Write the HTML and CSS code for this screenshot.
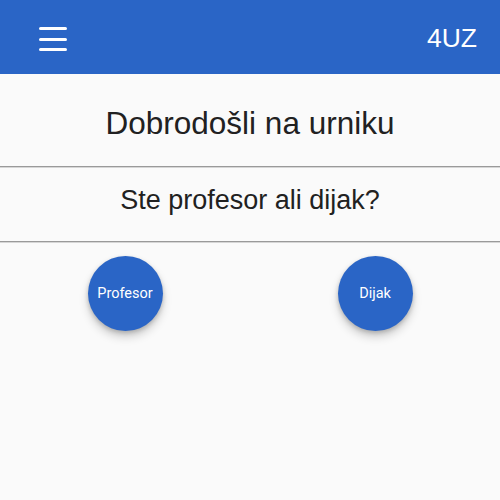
FILE: index.html
```html
<!DOCTYPE html>
<html>
<head>
<meta charset="utf-8">
<link rel="stylesheet" href="styles.css">
</head>
<body>
<header class="appbar">
  <div class="menu" aria-label="menu">
    <span class="bar"></span>
    <span class="bar"></span>
    <span class="bar"></span>
  </div>
  <div class="brand">4UZ</div>
</header>
<main class="content">
  <h1 class="title">Dobrodošli na urniku</h1>
  <h2 class="question">Ste profesor ali dijak?</h2>
  <div class="choices">
    <button class="fab">Profesor</button>
    <button class="fab">Dijak</button>
  </div>
</main>
</body>
</html>
```
FILE: styles.css
```css
html, body {
  margin: 0;
  padding: 0;
  background: #fafafa;
  font-family: "Liberation Sans", Arial, sans-serif;
  width: 500px;
  height: 500px;
  overflow: hidden;
}

.appbar {
  height: 74px;
  background: #2a65c6;
  display: flex;
  align-items: center;
  justify-content: space-between;
  padding: 0 23px 0 39px;
  box-sizing: border-box;
}

.menu {
  display: flex;
  flex-direction: column;
  gap: 7.5px;
  width: 28px;
  margin-top: 4px;
}

.bar {
  display: block;
  height: 3px;
  background: #ffffff;
  border-radius: 2px;
}

.brand {
  color: #ffffff;
  font-size: 26.5px;
  margin-top: 3px;
}

.content {
  display: flex;
  flex-direction: column;
}

.title {
  margin: 0;
  font-weight: normal;
  font-size: 31.5px;
  line-height: 40px;
  color: #212121;
  text-align: center;
  padding: 29px 0 23px;
  border-bottom: 1px solid #9a9a9a;
  box-shadow: 0 1px 0 #d6d6d6;
}

.question {
  margin: 0;
  font-weight: normal;
  font-size: 27px;
  line-height: 34px;
  color: #212121;
  text-align: center;
  padding: 16px 0 24px;
  border-bottom: 1px solid #9a9a9a;
  box-shadow: 0 1px 0 #d6d6d6;
}

.choices {
  display: flex;
  justify-content: space-around;
  padding-top: 14px;
}

.fab {
  width: 75px;
  height: 75px;
  border-radius: 50%;
  border: none;
  background: #2a65c6;
  color: #ffffff;
  font-family: Roboto, "Liberation Sans", sans-serif;
  font-size: 14.5px;
  padding: 0;
  box-shadow: 0 6px 10px rgba(0,0,0,0.18), 0 2px 4px rgba(0,0,0,0.18);
}
```
